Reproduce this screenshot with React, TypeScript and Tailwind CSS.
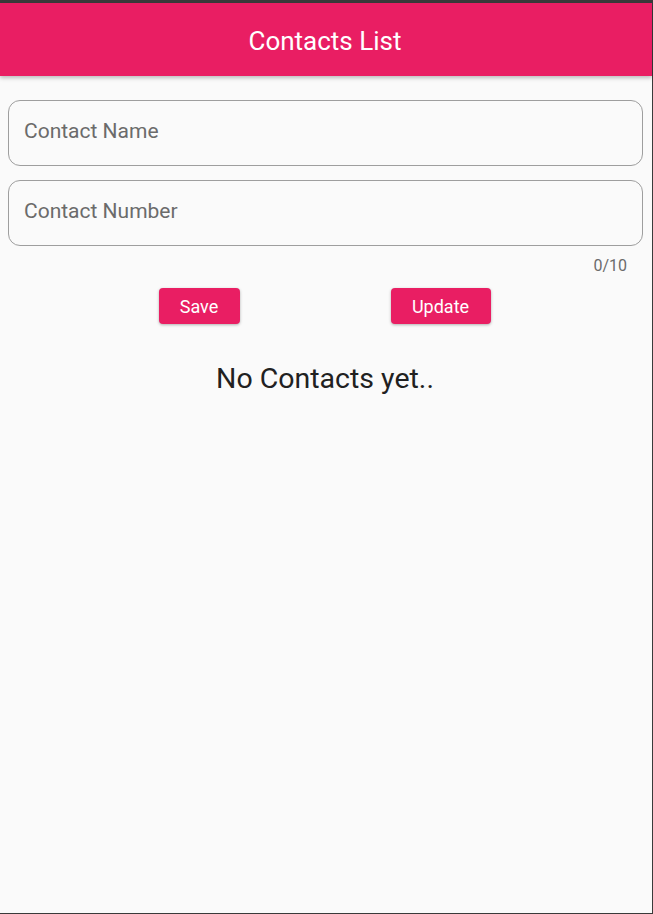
import React from "react";

export default function App() {
  const font = { fontFamily: "Roboto, 'Noto Sans', sans-serif" };
  return (
    <div className="w-[653px] h-[914px] bg-[#3a3a3a] pt-[3px] pb-px pr-px" style={font}>
      <div className="w-[652px] h-[910px] bg-[#fafafa] flex flex-col">
        <header className="h-[73px] bg-[#e91e63] flex items-center justify-center shadow-[0_2px_4px_rgba(0,0,0,0.25)] relative z-10 shrink-0">
          <h1 className="text-white text-[26px] leading-none pt-[2px] pr-[2px]">Contacts List</h1>
        </header>
        <div className="pl-2 pr-[9px] pt-6 flex flex-col">
          <div className="h-[66px] border border-[#9e9e9e] rounded-[12px] flex items-center px-[15px] pb-[3px]">
            <span className="text-[21px] text-[#6b6b6b] leading-none">Contact Name</span>
          </div>
          <div className="mt-[14px] h-[66px] border border-[#9e9e9e] rounded-[12px] flex items-center px-[15px] pb-[3px]">
            <span className="text-[21px] text-[#6b6b6b] leading-none">Contact Number</span>
          </div>
          <div className="flex justify-end pr-[16px] mt-[12px]">
            <span className="text-[16px] text-[#6b6b6b] leading-none">0/10</span>
          </div>
          <div className="flex justify-center gap-[151px] mt-[14px] pr-[2px]">
            <button className="w-[81px] h-[36px] bg-[#e91e63] rounded-[4px] text-white text-[18px] shadow-[0_1px_3px_rgba(0,0,0,0.3)]">
              Save
            </button>
            <button className="w-[100px] h-[36px] bg-[#e91e63] rounded-[4px] text-white text-[18px] shadow-[0_1px_3px_rgba(0,0,0,0.3)]">
              Update
            </button>
          </div>
          <p className="text-center text-[28.5px] text-[#212121] mt-[41px] leading-none pr-px">No Contacts yet..</p>
        </div>
      </div>
    </div>
  );
}
